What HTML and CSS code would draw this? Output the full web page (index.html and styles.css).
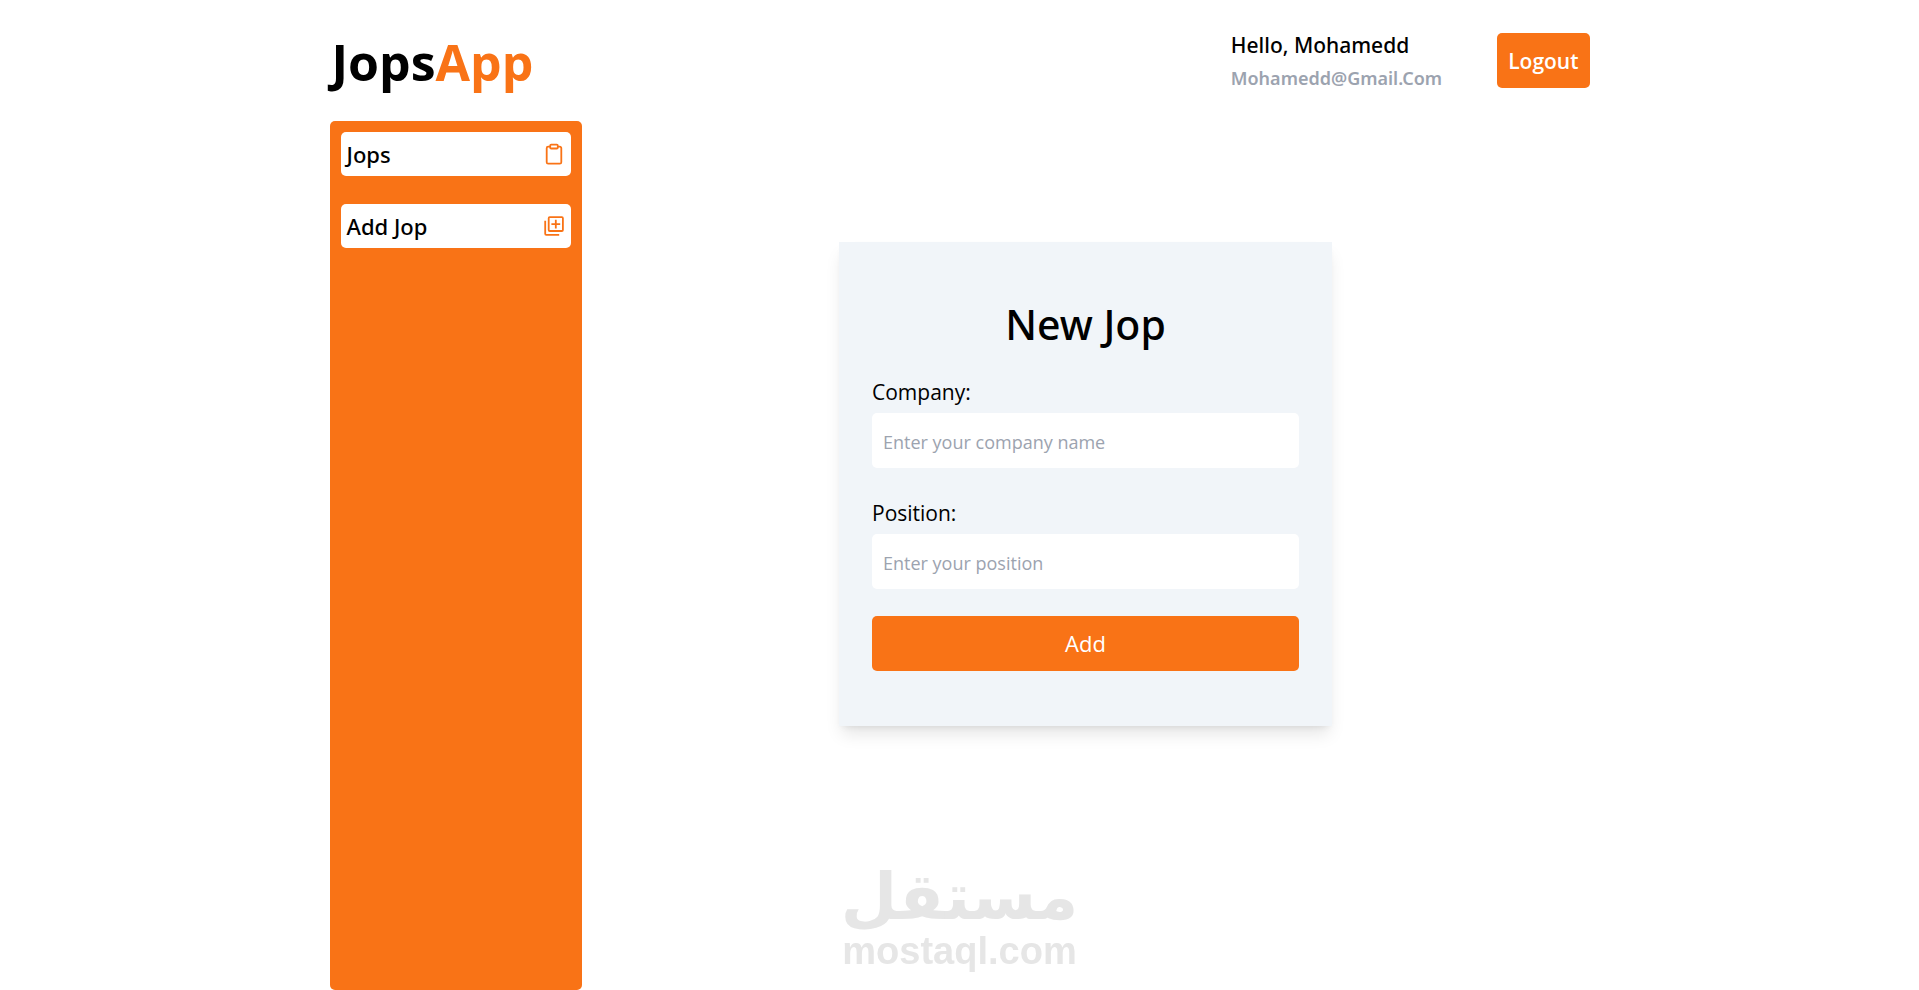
FILE: index.html
```html
<!DOCTYPE html>
<html lang="en">
<head>
    <meta charset="UTF-8">
    <meta name="viewport" content="width=device-width, initial-scale=1.0">
    <title>JopsApp</title>
    <link rel="stylesheet" href="styles.css">
</head>
<body>

    <div class="container">
        <header class="header">
            <h1 class="logo">Jops<span>App</span></h1>
            <div class="account">
                <div class="user">
                    <p class="user-name">Hello, Mohamedd</p>
                    <p class="user-email">Mohamedd@Gmail.Com</p>
                </div>
                <button class="logout" type="button">Logout</button>
            </div>
        </header>

        <div class="content">
            <nav class="sidebar">
                <a class="side-link" href="#jops">
                    Jops
                    <svg class="icon" viewBox="0 0 22 22" aria-hidden="true">
                        <path d="M7 3.7H5.2a1.5 1.5 0 0 0-1.5 1.5v14a1.5 1.5 0 0 0 1.5 1.5h11.6a1.5 1.5 0 0 0 1.5-1.5v-14a1.5 1.5 0 0 0-1.5-1.5H15"/>
                        <rect x="7.2" y="1.7" width="7.6" height="3.8" rx="1"/>
                    </svg>
                </a>
                <a class="side-link" href="#add">
                    Add Jop
                    <svg class="icon" viewBox="0 0 22 22" aria-hidden="true">
                        <rect x="5.7" y="2.2" width="14.2" height="13.8" rx="1"/>
                        <path d="M2.2 5.8v13a1 1 0 0 0 1 1h13M12.8 4.7v8.8M8.4 9.1h8.8"/>
                    </svg>
                </a>
            </nav>

            <main class="main">
                <form class="card">
                    <h2>New Jop</h2>
                    <div class="field">
                        <label for="company">Company:</label>
                        <input type="text" id="company" placeholder="Enter your company name">
                    </div>
                    <div class="field">
                        <label for="position">Position:</label>
                        <input type="text" id="position" placeholder="Enter your position">
                    </div>
                    <button class="submit" type="button">Add</button>
                </form>
            </main>
        </div>
    </div>

    <div class="watermark">
        <span class="mark-ar" lang="ar" dir="rtl">مستقل</span>
        <span class="mark-en">mostaql.com</span>
    </div>

</body>
</html>
```
FILE: styles.css
```css
:root {
    --orange: #f97316;
    --card-bg: #f1f5f9;
    --muted: #9ca3af;
    --mark: #e6e6e6;
}

* {
    box-sizing: border-box;
    margin: 0;
    padding: 0;
}

body {
    font-family: 'Segoe UI', 'Open Sans', sans-serif;
    font-size: 21px;
    line-height: 33px;
    color: black;
    background-color: white;
}

input,
button {
    font: inherit;
    border: none;
    border-radius: 5px;
}

button {
    background-color: var(--orange);
    color: white;
    cursor: pointer;
}

.container {
    display: flex;
    flex-direction: column;
    max-width: 1260px;
    min-height: 100vh;
    margin: 0 auto;
}

.header {
    display: flex;
    justify-content: space-between;
    align-items: center;
    padding: 25px 0 26px;
}

.logo {
    padding: 4px 0 0 2px;
    font-size: 50px;
    line-height: 55px;
    font-weight: 700;
}

.logo span {
    color: var(--orange);
}

.account {
    display: flex;
    align-items: center;
    gap: 55px;
}

.user {
    padding-top: 4px;
}

.user-name,
.user-email,
.side-link,
.card h2 {
    font-family: 'Segoe UI', 'Noto Sans', sans-serif;
    font-weight: 500;
}

.user-email {
    font-size: 18px;
    font-weight: 600;
    color: var(--muted);
}

.logout {
    height: 55px;
    padding: 2px 11px 0;
    font-weight: 600;
}

.content {
    display: flex;
    flex: 1;
}

.sidebar {
    display: flex;
    flex-direction: column;
    gap: 28px;
    width: 20%;
    padding: 11px;
    background-color: var(--orange);
    border-radius: 5px;
}

.side-link {
    display: flex;
    justify-content: space-between;
    align-items: center;
    height: 44px;
    padding: 0 6px;
    font-size: 22px;
    color: black;
    text-decoration: none;
    background-color: white;
    border-radius: 5px;
}

.icon {
    width: 22px;
    height: 22px;
    fill: none;
    stroke: var(--orange);
    stroke-width: 1.8;
}

.main {
    flex: 1;
    padding-top: 121px;
}

.card {
    display: flex;
    flex-direction: column;
    gap: 27px;
    width: 100%;
    max-width: 493px;
    margin: 0 auto;
    padding: 60px 33px 55px;
    background-color: var(--card-bg);
    box-shadow: 0 11px 16px -3px rgba(0, 0, 0, 0.1), 0 4px 7px -4px rgba(0, 0, 0, 0.1);
}

.card h2 {
    font-size: 41px;
    line-height: 45px;
    text-align: center;
}

.field {
    display: flex;
    flex-direction: column;
    gap: 2px;
}

.field label {
    line-height: 37px;
}

.field input {
    width: 100%;
    height: 55px;
    padding: 3px 11px 0;
    font-size: 18px;
    background-color: white;
}

.field input::placeholder {
    color: var(--muted);
}

.submit {
    height: 55px;
    font-size: 22px;
}

/* sits over the page, centred at the bottom */
.watermark {
    position: fixed;
    right: 0;
    bottom: 20px;
    left: 0;
    display: flex;
    flex-direction: column;
    align-items: center;
    color: var(--mark);
    font-weight: 700;
    pointer-events: none;
}

.mark-ar {
    font-family: 'DejaVu Sans', sans-serif;
    font-size: 65px;
    line-height: 70px;
}

.mark-en {
    font-family: 'Liberation Sans', Arial, sans-serif;
    font-size: 38px;
    line-height: 38px;
}
```
